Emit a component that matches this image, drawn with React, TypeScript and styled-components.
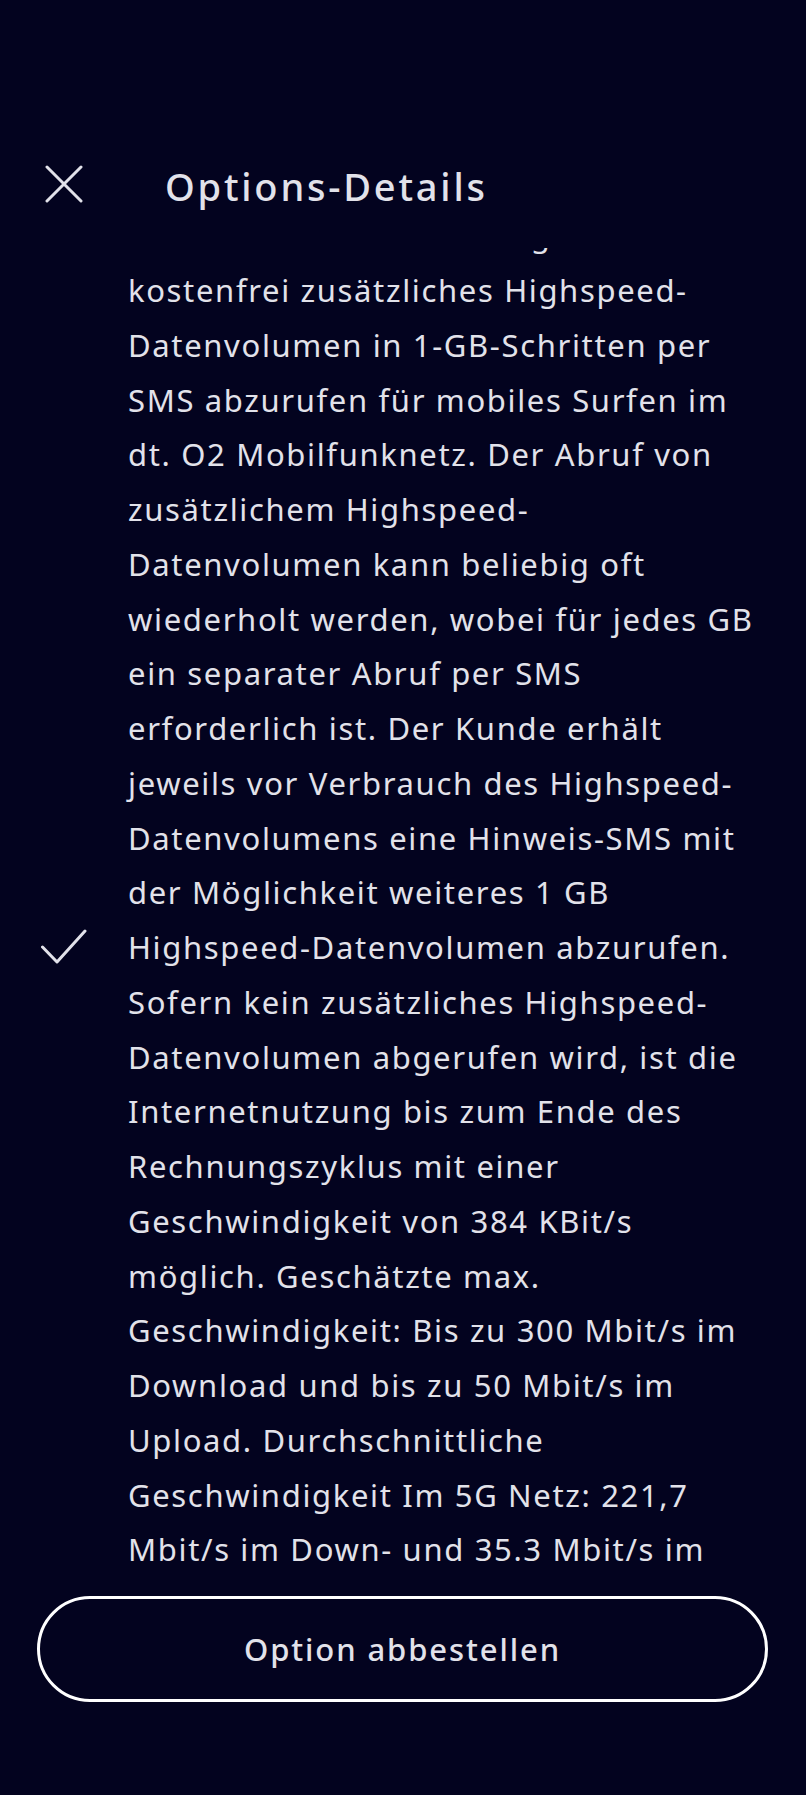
import React, { useLayoutEffect, useRef } from 'react'
import styled, { createGlobalStyle } from 'styled-components'

const lines = [
    'Die Option beinhaltet monatlich 10 GB',
    'Highspeed-Datenvolumen. Nach',
    'Verbrauch des Inklusivvolumens hat',
    'der Kunde zudem die Möglichkeit',
    'kostenfrei zusätzliches Highspeed-',
    'Datenvolumen in 1-GB-Schritten per',
    'SMS abzurufen für mobiles Surfen im',
    'dt. O2 Mobilfunknetz. Der Abruf von',
    'zusätzlichem Highspeed-',
    'Datenvolumen kann beliebig oft',
    'wiederholt werden, wobei für jedes GB',
    'ein separater Abruf per SMS',
    'erforderlich ist. Der Kunde erhält',
    'jeweils vor Verbrauch des Highspeed-',
    'Datenvolumens eine Hinweis-SMS mit',
    'der Möglichkeit weiteres 1 GB',
    'Highspeed-Datenvolumen abzurufen.',
    'Sofern kein zusätzliches Highspeed-',
    'Datenvolumen abgerufen wird, ist die',
    'Internetnutzung bis zum Ende des',
    'Rechnungszyklus mit einer',
    'Geschwindigkeit von 384 KBit/s',
    'möglich. Geschätzte max.',
    'Geschwindigkeit: Bis zu 300 Mbit/s im',
    'Download und bis zu 50 Mbit/s im',
    'Upload. Durchschnittliche',
    'Geschwindigkeit Im 5G Netz: 221,7',
    'Mbit/s im Down- und 35.3 Mbit/s im',
    'Upload. Weitere Informationen unter',
    'o2online.de/netz. Die Option kann',
    'jederzeit zum Ende des laufenden',
    'Abrechnungszeitraums gekündigt',
    'werden.',
]

export default function App() {
    const scrollRef = useRef<HTMLDivElement>(null)

    // the sheet is shown already scrolled a bit down
    useLayoutEffect(() => {
        if (scrollRef.current) scrollRef.current.scrollTop = 204
    }, [])

    return (
        <>
            <GlobalStyle />
            <Page>
                <Header>
                    <CloseButton aria-label="Schließen">
                        <svg width="38" height="38" viewBox="0 0 38 38">
                            <path d="M2 2 L36 36 M36 2 L2 36" stroke="#e2e2ea" strokeWidth="3" strokeLinecap="round" />
                        </svg>
                    </CloseButton>
                    <Title>Options-Details</Title>
                </Header>
                <Scroller ref={scrollRef}>
                    <Feature>
                        <CheckCell>
                            <svg width="46" height="36" viewBox="0 0 46 36">
                                <path d="M1.5 18 L16 33 L44 2" stroke="#e2e2ea" strokeWidth="3" fill="none" strokeLinecap="round" strokeLinejoin="round" />
                            </svg>
                        </CheckCell>
                        <Description>
                            {lines.map((l, i) => <Line key={i}>{l}</Line>)}
                        </Description>
                    </Feature>
                </Scroller>
                <Footer>
                    <OutlineButton>Option abbestellen</OutlineButton>
                </Footer>
            </Page>
        </>
    )
}

const GlobalStyle = createGlobalStyle`
    html, body {
        margin: 0;
        padding: 0;
        background: #03031f;
    }
    * {
        box-sizing: border-box;
    }
`;

const Page = styled.div`
    height: 1795px;
    display: flex;
    flex-direction: column;
    background: #03031f;
    color: #e2e2ea;
    font-family: 'Noto Sans', 'Open Sans', sans-serif;
`;

const Header = styled.div`
    height: 248px;
    display: flex;
    align-items: flex-start;
    padding: 165px 0 0 45px;
`;

const CloseButton = styled.button`
    width: 38px;
    height: 38px;
    padding: 0;
    border: none;
    background: none;
    display: flex;
`;

const Title = styled.h1`
    margin: -2px 0 0 82px;
    font-size: 38px;
    line-height: 46px;
    font-weight: 500;
    letter-spacing: 2.8px;
    color: #e2e2ea;
`;

const Scroller = styled.div`
    height: 1314px;
    overflow: hidden;
`;

const Feature = styled.div`
    display: flex;
    align-items: center;
`;

const CheckCell = styled.div`
    width: 128px;
    flex-shrink: 0;
    padding-left: 41px;
    display: flex;
`;

const Description = styled.p`
    margin: 0;
    font-size: 31px;
    line-height: 54.75px;
    letter-spacing: 1.65px;
    color: #e2e2ea;
`;

const Line = styled.span`
    display: block;
    white-space: nowrap;
`;

const Footer = styled.div`
    padding: 34px 38px 0 37px;
`;

const OutlineButton = styled.button`
    width: 100%;
    height: 106px;
    border: 3px solid #ffffff;
    border-radius: 53px;
    background: transparent;
    color: #e2e2ea;
    font-family: 'Noto Sans', 'Open Sans', sans-serif;
    font-size: 31px;
    font-weight: 500;
    letter-spacing: 1.9px;
`;
